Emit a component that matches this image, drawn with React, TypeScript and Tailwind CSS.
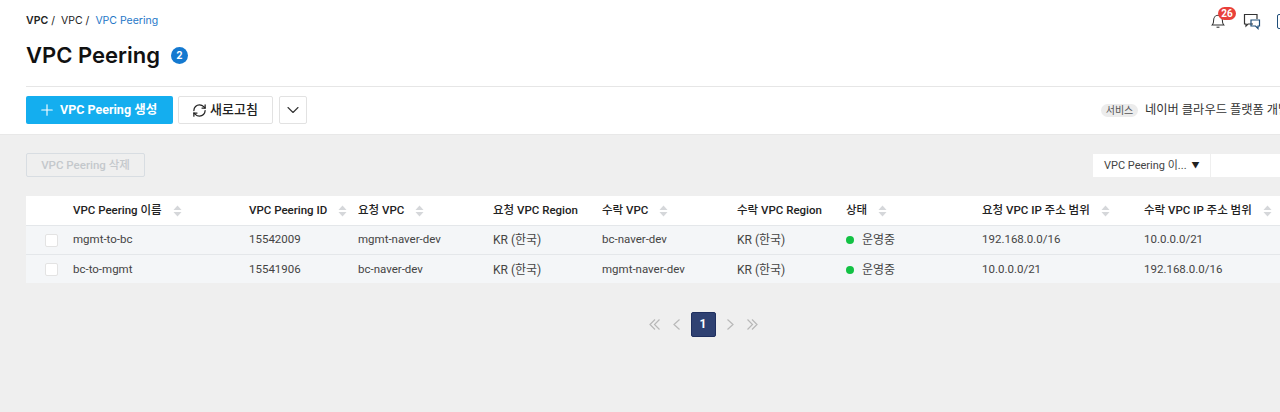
import React from 'react';
import { ChevronDown, Plus, RefreshCw } from 'lucide-react';

const columns = 'grid grid-cols-[47px_176px_109px_135px_109px_135px_109px_136px_162px_136px]';

const headers = [
  { label: 'VPC Peering 이름', sort: true },
  { label: 'VPC Peering ID', sort: true },
  { label: '요청 VPC', sort: true },
  { label: '요청 VPC Region' },
  { label: '수락 VPC', sort: true },
  { label: '수락 VPC Region' },
  { label: '상태', sort: true },
  { label: '요청 VPC IP 주소 범위', sort: true },
  { label: '수락 VPC IP 주소 범위', sort: true },
];

const rows = [
  { name: 'mgmt-to-bc', id: '15542009', from: 'mgmt-naver-dev', to: 'bc-naver-dev', fromIp: '192.168.0.0/16', toIp: '10.0.0.0/21' },
  { name: 'bc-to-mgmt', id: '15541906', from: 'bc-naver-dev', to: 'mgmt-naver-dev', fromIp: '10.0.0.0/21', toIp: '192.168.0.0/16' },
];

const SortIcon = () => (
  <svg width="9" height="12" viewBox="0 0 9 12" className="ml-[11px] shrink-0">
    <path d="M4.5 0.5 L8.5 5 H0.5 Z" fill="#d5d7da" />
    <path d="M4.5 11.5 L8.5 7 H0.5 Z" fill="#d5d7da" />
  </svg>
);

const BellIcon = () => (
  <svg width="14" height="16" viewBox="0 0 16 18" fill="none" stroke="#333" strokeWidth="1.2">
    <path d="M1.5 13.5 C3 12 3 10.5 3 8 C3 5 5 2.5 8 2.5 C11 2.5 13 5 13 8 C13 10.5 13 12 14.5 13.5 Z" />
    <path d="M6.5 15.5 C7 16.5 9 16.5 9.5 15.5" />
  </svg>
);

const ChatIcon = () => (
  <svg width="18" height="17" viewBox="0 0 18 17" fill="none" stroke="#333" strokeWidth="1.2">
    <path d="M10 11 H5 L3 13 V11 H1.5 V1.5 H14 V6" />
    <path d="M8 7 H16.5 V13 H15 V15.5 L12.5 13 H8 Z" stroke="#1f4e79" />
  </svg>
);

const PageArrow = ({ d, width }: { d: string; width: number }) => (
  <svg width={width} height="11" viewBox={`0 0 ${width} 11`} fill="none" stroke="#b8b8b8" strokeWidth="1.2">
    <path d={d} />
  </svg>
);

const App = () => {
  return (
    <div className="h-[412px] w-[1280px] overflow-hidden bg-[#efefef] font-['Roboto','Noto_Sans_CJK_KR',sans-serif] text-[11.5px] text-[#333]">
      <div className="h-[135px] border-b border-[#e8e8e8] bg-white pl-[26px]">
        <div className="flex h-[87px] flex-col border-b border-[#e6e6e6]">
          <div className="flex items-start justify-between pt-[14px]">
            <div className="flex font-['Inter','Noto_Sans_CJK_KR',sans-serif] text-[10.5px] leading-[14px] text-[#222]">
              <span className="font-semibold">VPC</span>
              <span className="ml-[3px]">/</span>
              <span className="ml-[6px]">VPC</span>
              <span className="ml-[3px]">/</span>
              <span className="ml-[6px] text-[#1f78c8]">VPC Peering</span>
            </div>
            <div className="-mr-[9px] -mt-[1px] flex items-start">
              <div className="relative h-[16px] w-[14px]">
                <BellIcon />
                <span className="absolute left-[7px] -top-[6px] flex h-[13px] w-[18px] items-center justify-center rounded-full bg-[#e9403a] text-[10px] leading-none font-bold text-white">
                  26
                </span>
              </div>
              <div className="ml-[18px]">
                <ChatIcon />
              </div>
              <div className="ml-[16px] mt-[1px] h-[15px] w-[12px] rounded-[2px] border border-[#1f4e79]" />
            </div>
          </div>
          <div className="mt-[11px] flex items-center">
            <h1 className="font-['Inter','Noto_Sans_CJK_KR',sans-serif] text-[22px] leading-[28px] font-semibold text-[#111]">VPC Peering</h1>
            <span className="ml-[11px] flex h-[17px] w-[17px] items-center justify-center rounded-full bg-[#1479d0] font-['Inter',sans-serif] text-[10px] font-bold text-white">
              2
            </span>
          </div>
        </div>
        <div className="mt-[9px] flex items-center">
          <button className="flex h-[28px] w-[147px] items-center rounded-[2px] bg-[#14aeef] pl-[12px] text-[12.5px] font-bold text-white">
            <Plus size={18} strokeWidth={1.5} />
            <span className="ml-[4px]">VPC Peering 생성</span>
          </button>
          <button className="ml-[5px] flex h-[28px] w-[95px] items-center rounded-[2px] border border-[#e2e2e2] bg-white pl-[13px] text-[13px] font-medium text-[#222]">
            <RefreshCw size={15} strokeWidth={2} />
            <span className="ml-[3px]">새로고침</span>
          </button>
          <button className="ml-[6px] flex h-[28px] w-[28px] items-center justify-center rounded-[2px] border border-[#e2e2e2] bg-white text-[#333]">
            <ChevronDown size={20} strokeWidth={1.3} />
          </button>
          <div className="ml-auto flex items-center whitespace-nowrap">
            <span className="flex h-[13px] w-[37px] items-center justify-center rounded-full bg-[#ececec] text-[10px] text-[#555]">서비스</span>
            <span className="ml-[7px] w-[135px] overflow-hidden text-[12.25px] text-[#333]">네이버 클라우드 플랫폼 개발</span>
          </div>
        </div>
      </div>

      <div className="w-[1380px] pl-[26px]">
        <div className="mt-[18px] flex items-center justify-between pr-[100px]">
          <button className="h-[24px] w-[119px] rounded-[2px] border border-[#d8dde2] bg-[#efefef] pt-[2px] text-[11.5px] font-medium text-[#c4c8cc]">
            VPC Peering 삭제
          </button>
          <div className="flex h-[23px]">
            <div className="flex w-[117px] items-center bg-white pl-[11px] pt-[2px] text-[11px] text-[#444]">
              VPC Peering 이...
              <span className="ml-[5px] text-[8px] text-[#222]">▼</span>
            </div>
            <div className="ml-[1px] w-[69px] bg-white" />
          </div>
        </div>

        <div className="mt-[19px]">
          <div className={`${columns} h-[30px] items-center border-b border-[#e4e7ea] bg-white font-medium text-[#222]`}>
            <div />
            {headers.map((header) => (
              <div key={header.label} className="flex items-center whitespace-nowrap">
                <span>{header.label}</span>
                {header.sort && <SortIcon />}
              </div>
            ))}
          </div>
          {rows.map((row, i) => (
            <div
              key={row.name}
              className={`${columns} items-center bg-[#f4f6f8] text-[#444] ${i === 0 ? 'h-[29px] border-b border-[#e4e7ea]' : 'h-[28px] pt-[1px]'}`}
            >
              <div className="pl-[19px]">
                <div className="h-[13px] w-[13px] rounded-[2px] border border-[#e3e3e3] bg-white" />
              </div>
              <div className="whitespace-nowrap">{row.name}</div>
              <div className="whitespace-nowrap">{row.id}</div>
              <div className="whitespace-nowrap">{row.from}</div>
              <div className="whitespace-nowrap text-[12px]">KR (한국)</div>
              <div className="whitespace-nowrap">{row.to}</div>
              <div className="whitespace-nowrap text-[12px]">KR (한국)</div>
              <div className="flex items-center whitespace-nowrap text-[12px]">
                <span className="h-[8px] w-[8px] rounded-full bg-[#12c244]" />
                <span className="ml-[8px]">운영중</span>
              </div>
              <div className="whitespace-nowrap">{row.fromIp}</div>
              <div className="whitespace-nowrap">{row.toIp}</div>
            </div>
          ))}
        </div>

        <div className="mt-[29px] flex items-center justify-center">
          <PageArrow width={11} d="M6 0.5 L1 5.5 L6 10.5 M10.5 0.5 L5.5 5.5 L10.5 10.5" />
          <div className="ml-[13px]">
            <PageArrow width={7} d="M6.5 0.5 L1 5.5 L6.5 10.5" />
          </div>
          <span className="ml-[11px] flex h-[25px] w-[25px] items-center justify-center rounded-[2px] border border-[#1f2f5f] bg-[#2f4172] pb-[1px] text-[12px] font-bold text-white">
            1
          </span>
          <div className="ml-[11px]">
            <PageArrow width={7} d="M0.5 0.5 L6 5.5 L0.5 10.5" />
          </div>
          <div className="ml-[13px]">
            <PageArrow width={11} d="M0.5 0.5 L5.5 5.5 L0.5 10.5 M5 0.5 L10 5.5 L5 10.5" />
          </div>
        </div>
      </div>
    </div>
  );
};

export default App;
